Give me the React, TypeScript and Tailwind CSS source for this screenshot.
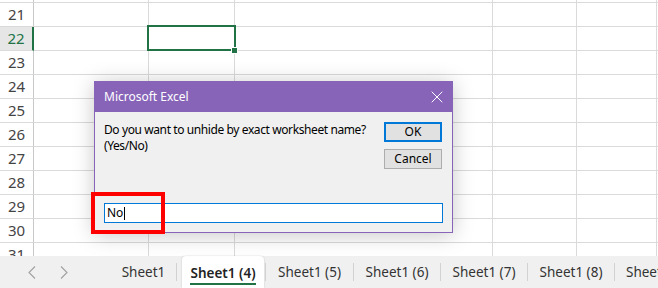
import { X } from "lucide-react";

const rows = [21, 22, 23, 24, 25, 26, 27, 28, 29, 30, 31];
const cols = ["w-[115px]", "w-[86px]", "w-[258px]", "w-[84px]", "w-[80px]"];

function GridRow({ n, h }: { n: number | null; h: string }) {
  const active = n === 22;
  return (
    <div className={`flex ${h} shrink-0`}>
      <div
        className={`w-[34px] shrink-0 flex items-center justify-center border-b border-[#dadada] text-[15px] ${
          active
            ? "bg-[#e6e6e6] text-[#217346] border-r-2 border-r-[#217346]"
            : "text-[#444] border-r border-r-[#c8c8c8]"
        }`}
      >
        {n}
      </div>
      {cols.map((w, i) => (
        <div key={i} className={`${w} shrink-0 border-r border-b border-[#dadada]`} />
      ))}
      <div className="flex-1 border-b border-[#dadada]" />
    </div>
  );
}

function Chevron({ dir }: { dir: "l" | "r" }) {
  return (
    <svg width="8" height="13" viewBox="0 0 8 13" fill="none" stroke="#a0a0a0" strokeWidth="1.1">
      {dir === "l" ? <path d="M7 0.5 L1 6.5 L7 12.5" /> : <path d="M1 0.5 L7 6.5 L1 12.5" />}
    </svg>
  );
}

function Sep() {
  return <div className="w-px h-[18px] bg-[#d2d2d2] shrink-0" />;
}

export default function App() {
  return (
    <div className="relative w-[658px] h-[288px] overflow-hidden bg-white font-['Segoe_UI','Noto_Sans',sans-serif]">
      {/* sheet grid */}
      <div className="flex flex-col h-[256px] overflow-hidden">
        <GridRow n={null} h="h-[3px]" />
        {rows.map((n) => (
          <GridRow key={n} n={n} h="h-[24px]" />
        ))}
      </div>

      {/* active cell */}
      <div className="absolute left-[147px] top-[25px] w-[89px] h-[26px] border-2 border-[#217346]" />
      <div className="absolute left-[231px] top-[47px] w-[7px] h-[7px] bg-[#217346] border border-white" />

      {/* sheet tabs */}
      <div className="flex items-center h-[32px] bg-[#f0f0f0] text-[13.5px] text-[#333] whitespace-nowrap">
        <div className="w-[111px] shrink-0 flex items-center pl-[28px] gap-[24px]">
          <Chevron dir="l" />
          <Chevron dir="r" />
        </div>
        <div className="w-[65px] shrink-0 text-center">Sheet1</div>
        <Sep />
        <div className="w-[88px] shrink-0 h-full pl-[5px] pr-px">
          <div className="h-full bg-white rounded-t-[4px] shadow-[0_0_2px_rgba(0,0,0,0.18)] flex items-center justify-center">
            <span className="font-semibold text-[#222] border-b-2 border-[#217346] leading-[20px] mt-[3px]">Sheet1 (4)</span>
          </div>
        </div>
        <Sep />
        <div className="w-[87px] shrink-0 text-center">Sheet1 (5)</div>
        <Sep />
        <div className="w-[86px] shrink-0 text-center">Sheet1 (6)</div>
        <Sep />
        <div className="w-[86px] shrink-0 text-center">Sheet1 (7)</div>
        <Sep />
        <div className="w-[86px] shrink-0 text-center">Sheet1 (8)</div>
        <Sep />
        <div className="pl-[11px]">Sheet1 (9)</div>
      </div>

      {/* input box dialog */}
      <div className="absolute left-[94px] top-[81px] w-[359px] h-[152px] border border-[#8764b8] bg-[#f0f0f0] shadow-[0_2px_20px_rgba(0,0,0,0.22)] flex flex-col text-[12px] text-black">
        <div className="h-[30px] shrink-0 bg-[#8764b8] flex items-center justify-between pl-[9px] pr-[5px] text-white">
          <span>Microsoft Excel</span>
          <X size={20} strokeWidth={1.2} color="#ffffff" />
        </div>
        <div className="flex-1 flex flex-col px-[9px] pt-[10px] pb-[9px]">
          <div className="flex justify-between">
            <div className="leading-[16px] whitespace-nowrap tracking-[-0.4px]">
              <div>Do you want to unhide by exact worksheet name?</div>
              <div>(Yes/No)</div>
            </div>
            <div className="flex flex-col gap-[7px] mr-[1px]">
              <div className="w-[58px] h-[20px] bg-[#e1e1e1] border-2 border-[#0078d7] flex items-center justify-center">OK</div>
              <div className="w-[58px] h-[20px] bg-[#e1e1e1] border border-[#adadad] flex items-center justify-center">Cancel</div>
            </div>
          </div>
          <div className="mt-auto h-[20px] bg-white border border-[#0078d7] flex items-center pl-[2px]">
            <span>No</span>
            <span className="w-px h-[13px] bg-black ml-px" />
          </div>
        </div>
      </div>

      {/* annotation */}
      <div className="absolute left-[91px] top-[192px] w-[74px] h-[42px] border-[4px] border-[#ff0000]" />
    </div>
  );
}
